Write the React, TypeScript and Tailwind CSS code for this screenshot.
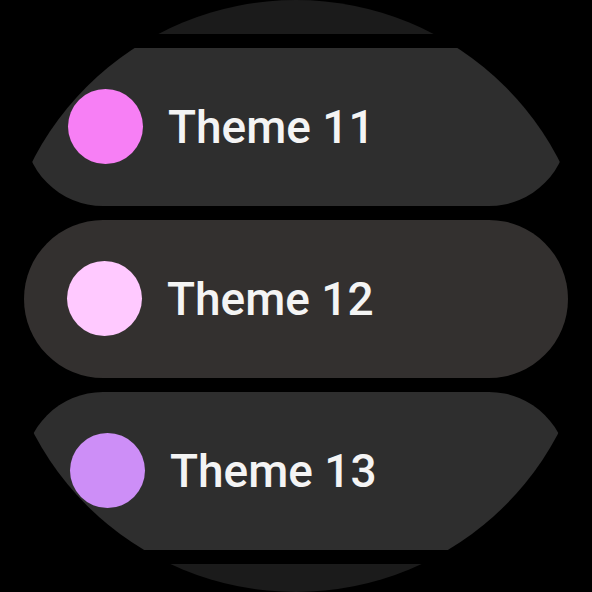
import React from "react";

type Theme = {
    name: string;
    swatch: string;
    chip: string;
    inset: string;
};

const themes: Theme[] = [
    {name: "Theme 11", swatch: "bg-[#f77ff5]", chip: "bg-[#2e2e2e]", inset: "pl-[44px]"},
    {name: "Theme 12", swatch: "bg-[#ffc9ff]", chip: "bg-[#33302f]", inset: "pl-[43px]"},
    {name: "Theme 13", swatch: "bg-[#cd8ef7]", chip: "bg-[#2e2e2e]", inset: "pl-[46px]"},
];

function GhostChip() {
    return <div className="h-[158px] w-[544px] shrink-0 rounded-full bg-[#1b1b1b]"/>;
}

function ThemeChip({theme}: { theme: Theme }) {
    return (
        <div className={`flex h-[158px] w-[544px] shrink-0 items-center rounded-full ${theme.inset} ${theme.chip}`}>
            <div className={`h-[75px] w-[75px] shrink-0 rounded-full ${theme.swatch}`}/>
            <span className="ml-[25px] text-[46px] font-medium leading-none text-[#f4f4f4] font-['Roboto',sans-serif]">
                {theme.name}
            </span>
        </div>
    );
}

export default function App() {
    return (
        <div className="h-[592px] w-[592px] bg-black">
            <div className="relative h-full w-full overflow-hidden rounded-full bg-black">
                <div className="flex h-full flex-col items-center justify-center gap-[14px] pt-[5px]">
                    <GhostChip/>
                    {themes.map((t) => (
                        <ThemeChip key={t.name} theme={t}/>
                    ))}
                    <GhostChip/>
                </div>
                {/* edge fade of the round screen */}
                <div
                    className="pointer-events-none absolute inset-0 rounded-full bg-[radial-gradient(circle_at_center,transparent_86%,rgba(0,0,0,0.6)_100%)]"/>
            </div>
        </div>
    );
}
